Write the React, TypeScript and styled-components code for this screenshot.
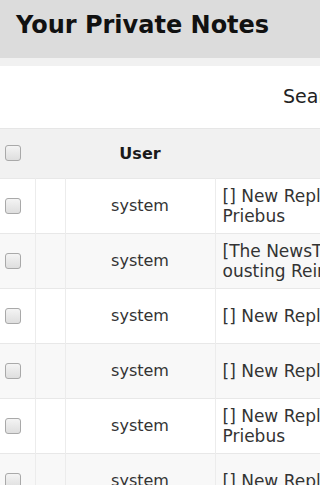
import styled, { createGlobalStyle } from 'styled-components';

const GlobalStyle = createGlobalStyle`
  html, body {
    margin: 0;
    padding: 0;
    overflow: hidden;
    background: #ffffff;
  }
  body {
    font-family: "DejaVu Sans", Verdana, sans-serif;
    color: #333333;
  }
`;

const Page = styled.div`
  width: 760px;
`;

const Header = styled.header`
  height: 58px;
  background: #dcdcdc;
  display: flex;
  align-items: center;
  padding: 0 16px;
  border-bottom: 8px solid #f1f1f1;
`;

const Title = styled.h1`
  margin: 0;
  font-size: 24px;
  font-weight: bold;
  color: #111111;
  padding-bottom: 8px;
`;

const SearchBar = styled.div`
  height: 62px;
  display: flex;
  align-items: center;
  padding-left: 283px;
  gap: 12px;
  border-bottom: 1px solid #e6e6e6;
`;

const SearchLabel = styled.label`
  font-size: 19px;
  color: #222222;
  padding-bottom: 3px;
`;

const SearchInput = styled.input`
  width: 200px;
  height: 28px;
  border: 1px solid #cccccc;
`;

const Table = styled.table`
  border-collapse: collapse;
  table-layout: fixed;
  width: 760px;
`;

const HeadRow = styled.tr`
  height: 49px;
  background: #f1f1f1;
`;

const Th = styled.th<{ $w: number }>`
  width: ${(p) => p.$w}px;
  padding: 0;
  font-size: 16px;
  font-weight: bold;
  color: #1a1a1a;
  text-align: center;
  vertical-align: middle;
`;

const Row = styled.tr<{ $odd: boolean }>`
  height: 55px;
  background: ${(p) => (p.$odd ? '#f8f8f8' : '#ffffff')};
  border-top: 1px solid #e8e8e8;
`;

const Td = styled.td<{ $align?: string }>`
  padding: 0 7px;
  border-left: 1px solid #ececec;
  font-size: 16px;
  line-height: 18px;
  color: #333333;
  text-align: ${(p) => p.$align || 'left'};
  vertical-align: middle;
  white-space: nowrap;
  overflow: hidden;
  &:first-child {
    border-left: none;
    padding: 0;
  }
`;

const SubjectCell = styled(Td)`
  font-size: 17px;
  line-height: 20px;
`;

const Box = styled.span`
  display: block;
  width: 14px;
  height: 14px;
  margin-left: 5px;
  border: 1px solid #a9a9a9;
  border-radius: 3px;
  background: linear-gradient(#f4f4f4, #dedede);
`;

const notes = [
  ['[] New Reply to: Trump replaces chief of staff Reince', 'Priebus'],
  ['[The NewsTalk] Trump names John Kelly chief after', 'ousting Reince Priebus'],
  ['[] New Reply to: Scaramucci says he is not a leaker'],
  ['[] New Reply to: White House shake-up continues'],
  ['[] New Reply to: Trump replaces chief of staff Reince', 'Priebus'],
  ['[] New Reply to: Kelly sworn in as chief of staff'],
];

export default function App() {
  return (
    <Page>
      <GlobalStyle />
      <Header>
        <Title>Your Private Notes</Title>
      </Header>
      <SearchBar>
        <SearchLabel>Search:</SearchLabel>
        <SearchInput />
      </SearchBar>
      <Table>
        <thead>
          <HeadRow>
            <Th $w={35}>
              <Box />
            </Th>
            <Th $w={30} />
            <Th $w={150}>User</Th>
            <Th $w={545}>Subject</Th>
          </HeadRow>
        </thead>
        <tbody>
          {notes.map((lines, i) => (
            <Row key={i} $odd={i % 2 === 1}>
              <Td>
                <Box />
              </Td>
              <Td />
              <Td $align="center">system</Td>
              <SubjectCell>
                {lines.map((l, j) => (
                  <div key={j}>{l}</div>
                ))}
              </SubjectCell>
            </Row>
          ))}
        </tbody>
      </Table>
    </Page>
  );
}
